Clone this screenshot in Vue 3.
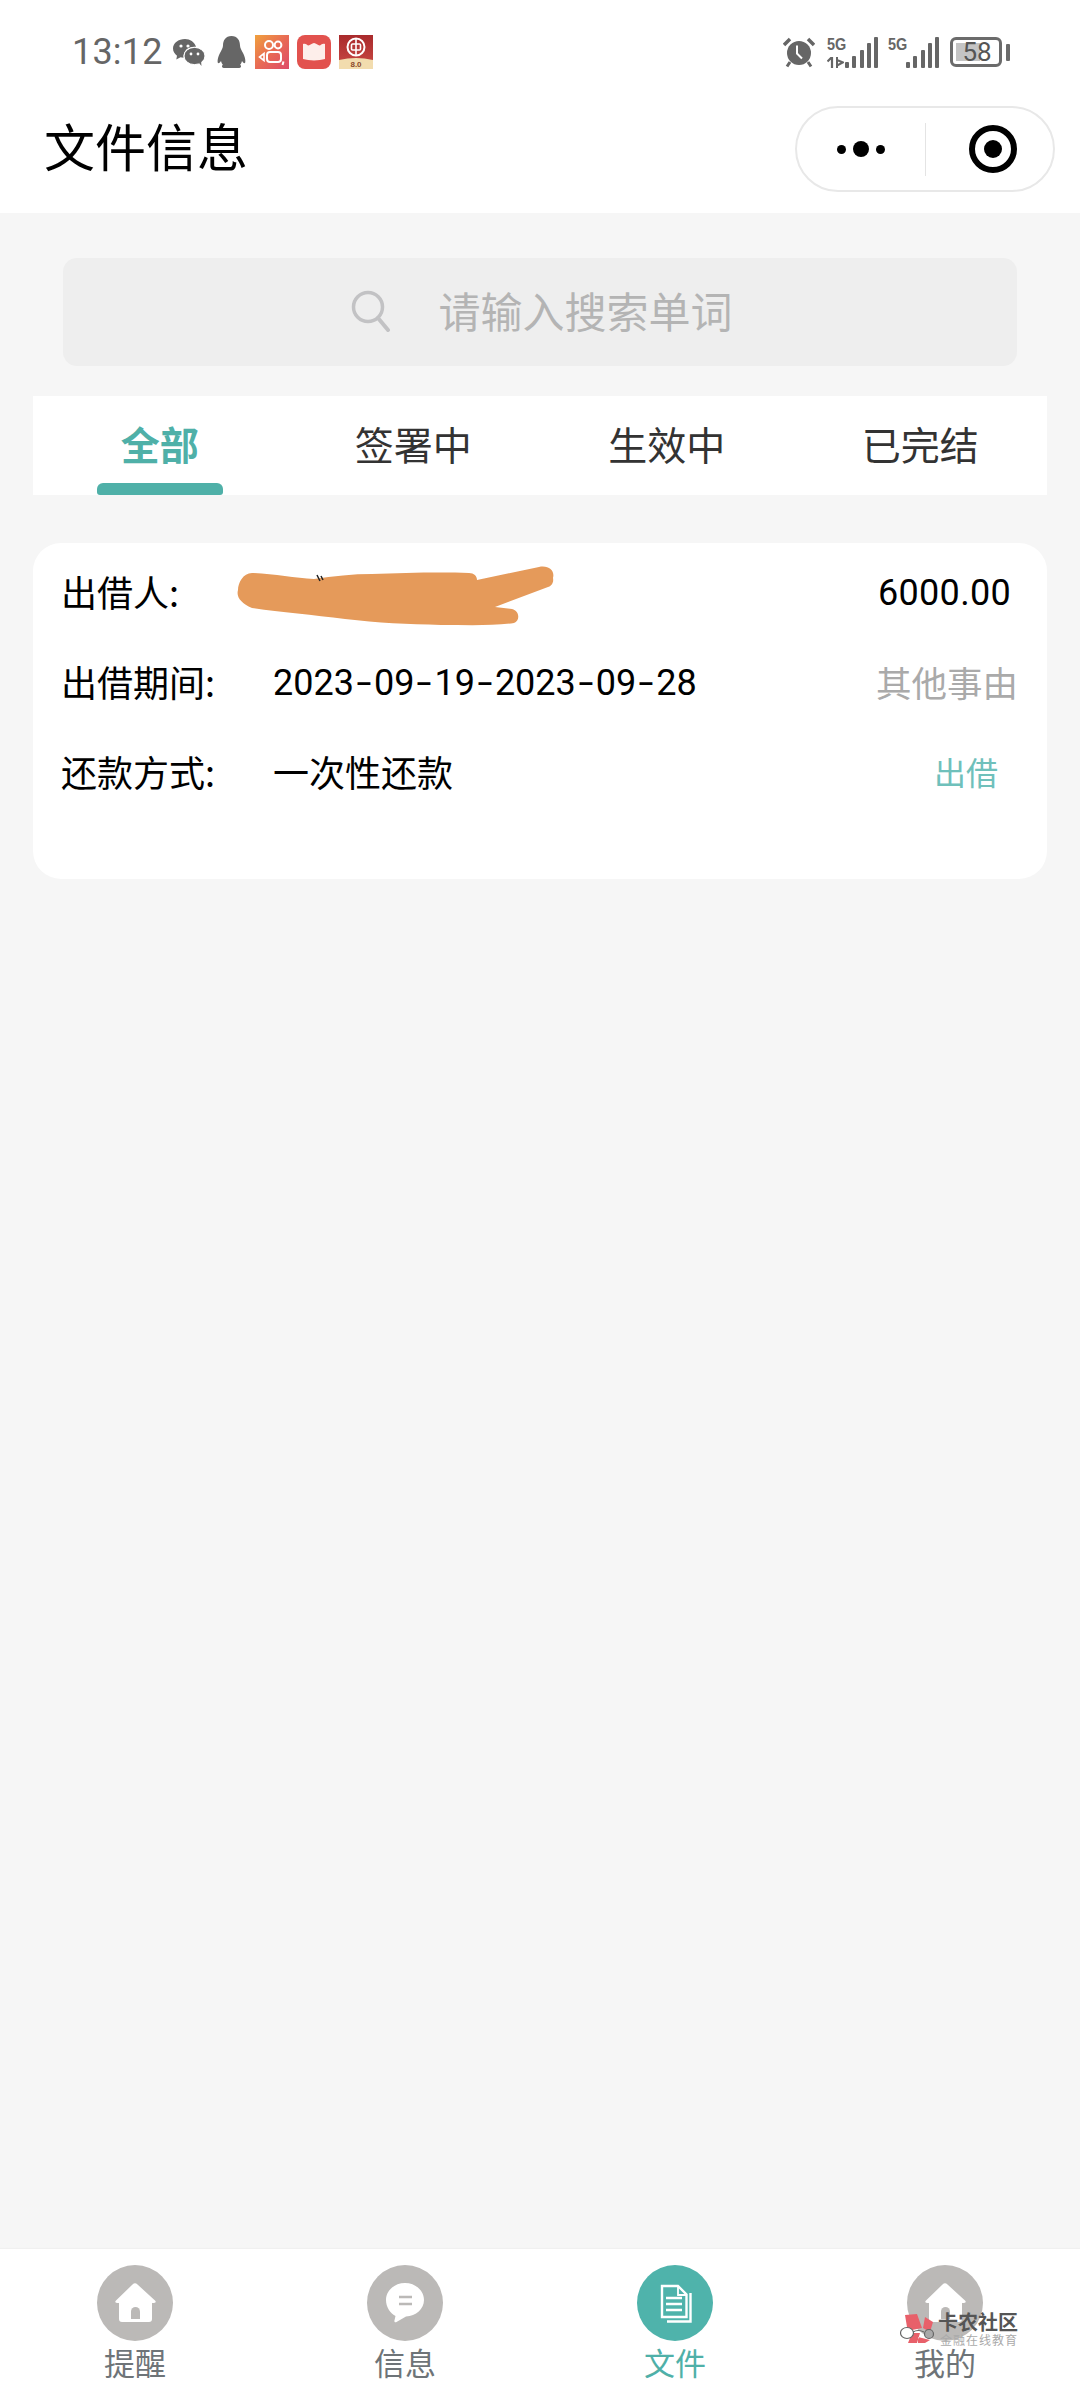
<template>
  <div class="page">
    <!-- 状态栏 -->
    <div class="status">
      <span class="time">13:12</span>
      <svg class="ic-wechat" width="32" height="27" viewBox="0 0 32 27">
        <path d="M12 0C5.500 0 0 4 0 9.500c0 3 1.700 5.500 4 7.200L3.300 20.500 7.500 18.300C8.500 18.600 9.500 18.800 10.500 18.800 10 10 17 7 23 7.800 21.500 3 17 0 12 0Z" fill="#666" />
        <ellipse cx="21.500" cy="17" rx="10.500" ry="8.600" fill="#666" stroke="#fff" stroke-width="1" />
        <path d="M26 24l2.500 3-.5-5z" fill="#666" />
        <circle cx="8" cy="7" r="1.600" fill="#fff" />
        <circle cx="15" cy="7" r="1.600" fill="#fff" />
        <circle cx="18" cy="15" r="1.400" fill="#fff" />
        <circle cx="25" cy="15" r="1.400" fill="#fff" />
      </svg>
      <svg class="ic-qq" width="29" height="32" viewBox="0 0 29 32">
        <path d="M14.500 0C8.500 0 6 4.500 6 9.500 6 12 4.500 14 3 17 .5 22 .2 26 1 27c1 .6 2.200-.8 3-2 .4 1.800 1.200 3.300 2.500 4.500H22.500C23.800 28.300 24.600 26.800 25 25c.8 1.200 2 2.600 3 2 .8-1 .5-5-2-10-1.500-3-3-5-3-7.500C23 4.500 20.500 0 14.500 0Z" fill="#666" />
        <rect x="5" y="28.500" width="19" height="3.500" rx="1.700" fill="#666" />
      </svg>
      <svg class="ic-app first" width="34" height="34" viewBox="0 0 34 34">
        <defs>
          <linearGradient id="ks" x1="0" y1="0" x2="1" y2="1">
            <stop offset="0" stop-color="#f0a13d" />
            <stop offset=".5" stop-color="#e86a55" />
            <stop offset="1" stop-color="#de4a68" />
          </linearGradient>
        </defs>
        <rect width="34" height="34" fill="url(#ks)" />
        <circle cx="14" cy="10" r="4" fill="none" stroke="#fff" stroke-width="2" />
        <circle cx="23" cy="10" r="3.400" fill="none" stroke="#fff" stroke-width="2" />
        <rect x="12" y="17" width="14" height="10" rx="3" fill="none" stroke="#fff" stroke-width="2" />
        <path d="M9 18.500v7l-4.500-3.500z" fill="none" stroke="#fff" stroke-width="1.600" />
        <path d="M28.500 26.500l-1 3.500" stroke="#fff" stroke-width="2" />
      </svg>
      <svg class="ic-app" width="34" height="34" viewBox="0 0 34 34">
        <rect width="34" height="34" rx="8" fill="#e2524e" />
        <path d="M6 9c3-1 4 1.500 5.500 1.500S15 8 17 8s4 2.500 5.500 2.500S25 8 28 9v15c-3 1-7 1-11 1.500C13 25 9 25 6 24Z" fill="#fdeeea" />
      </svg>
      <svg class="ic-app" width="34" height="34" viewBox="0 0 34 34">
        <defs>
          <linearGradient id="bank" x1="0" y1="0" x2="0" y2="1">
            <stop offset="0" stop-color="#a92a2c" />
            <stop offset="1" stop-color="#c2433f" />
          </linearGradient>
        </defs>
        <rect width="34" height="25" fill="url(#bank)" />
        <path d="M0 25q17-4 34 0v9H0z" fill="#f2dcae" />
        <circle cx="17" cy="12" r="8.500" fill="none" stroke="#fff" stroke-width="2" />
        <rect x="12.500" y="9" width="9" height="6" rx="1" fill="none" stroke="#fff" stroke-width="1.600" />
        <path d="M17 4v16" stroke="#fff" stroke-width="1.600" />
        <text x="17" y="32" text-anchor="middle" class="bank-ver">8.0</text>
      </svg>

      <div class="status-right">
        <svg width="32" height="31" viewBox="0 0 32 31">
          <circle cx="16" cy="16" r="12" fill="#666" />
          <path d="M1 8 7 2M31 8 25 2" stroke="#666" stroke-width="3.500" />
          <path d="M14 8.500v8l5 5" fill="none" stroke="#fff" stroke-width="2" />
          <path d="M7 25l-3 4.500M25 25l3 4.500" stroke="#666" stroke-width="3" />
        </svg>
        <div class="sim sim1">
          <span class="net">5G</span>
          <svg class="traffic" width="17" height="11" viewBox="0 0 17 11">
            <path d="M5 0v11M5 0 .5 4.500" fill="none" stroke="#666" stroke-width="2.200" />
            <path d="M10 0v11M10 3l6 2.500-6 3" fill="none" stroke="#666" stroke-width="2" />
          </svg>
          <div class="bars">
            <i v-for="h in barHeights" :key="h" :style="{ height: h + 'px' }"></i>
          </div>
        </div>
        <div class="sim sim2">
          <span class="net">5G</span>
          <div class="bars">
            <i v-for="h in barHeights" :key="h" :style="{ height: h + 'px' }"></i>
          </div>
        </div>
        <div class="battery">
          <div class="battery-fill"></div>
          <span>58</span>
        </div>
        <div class="battery-nub"></div>
      </div>
    </div>

    <!-- 标题栏 -->
    <div class="nav">
      <div class="nav-title">文件信息</div>
      <div class="capsule">
        <div class="capsule-more"><i class="dot"></i><i class="dot big"></i><i class="dot"></i></div>
        <div class="capsule-line"></div>
        <div class="capsule-target"><i></i></div>
      </div>
    </div>

    <div class="main">
      <div class="search">
        <svg width="40" height="42" viewBox="0 0 40 42">
          <circle cx="17" cy="17" r="14.500" fill="none" stroke="#c2c2c4" stroke-width="3.500" />
          <path d="M27 28l10 12" stroke="#c2c2c4" stroke-width="4" stroke-linecap="round" />
        </svg>
        <span>请输入搜索单词</span>
      </div>

      <div class="tabs">
        <div v-for="(t, i) in tabs" :key="t" class="tab" :class="{ on: i === 0 }">
          {{ t }}
          <div v-if="i === 0" class="tab-bar"></div>
        </div>
      </div>

      <div class="card">
        <div class="row">
          <span class="label cjk">出借人:</span>
          <span class="value"></span>
          <span class="amount">6000.00</span>
        </div>
        <div class="row">
          <span class="label cjk">出借期间:</span>
          <span class="value">
            <template v-for="(part, i) in dateParts" :key="i"><span v-if="i > 0" class="hyphen">-</span>{{ part }}</template>
          </span>
          <span class="reason cjk">其他事由</span>
        </div>
        <div class="row">
          <span class="label cjk">还款方式:</span>
          <span class="value cjk">一次性还款</span>
          <span class="kind cjk">出借</span>
        </div>
        <!-- 涂抹遮挡 -->
        <svg class="smear" width="340" height="70" viewBox="0 0 340 70">
          <path d="M19 8C40 9 62 13 81 14 100 11 120 9 139 9 170 8 205 7 236 8 241 8 244 11 244 15L306 2C316 0 322 6 320 13 321 18 318 21 315 22L262 42 279 44C287 46 287 56 281 58 260 61 235 60 208 60 175 59 145 58 112 54 80 50 45 47 19 43 8 38 3 32 5 25 5 18 10 8 19 8Z" fill="#e59a5a" />
          <path d="M84 10l3 6M88 11l2 4" stroke="#222" stroke-width="1.500" />
        </svg>
      </div>
    </div>

    <!-- 底部导航 -->
    <div class="tabbar">
      <div v-for="item in barItems" :key="item.label" class="bar-item" :class="{ on: item.on }">
        <svg class="bar-icon" width="76" height="76" viewBox="0 0 76 76">
          <circle cx="38" cy="38" r="38" :fill="item.on ? '#4fb3ab' : '#bbb9b7'" />
          <template v-if="item.icon === 'home'">
            <path d="M35.500 19.500a3.500 3.500 0 0 1 5 0L58 35.500c1.500 1.500.5 2.500-1 2.500H55V54a3 3 0 0 1-3 3H25a3 3 0 0 1-3-3V38H20c-1.500 0-2.500-1-1-2.500Z" fill="#fff" />
            <path d="M34 54V46.500a4.500 4.500 0 0 1 9 0V54Z" fill="#bbb9b7" />
          </template>
          <template v-else-if="item.icon === 'msg'">
            <path d="M38 18c10.500 0 19 7.500 19 17 0 9-8 16-18 16.500L29.500 57c-1.500.8-2.500-.3-2-1.800l1-4.200C23 48 19 42 19 35c0-9.500 8.500-17 19-17Z" fill="#fff" />
            <path d="M32 32h13M32 39h13" stroke="#bbb9b7" stroke-width="2.600" />
          </template>
          <template v-else>
            <path d="M25 21H41L49.500 29.500V52H25Z" fill="none" stroke="#fff" stroke-width="2.400" />
            <path d="M41 21V30H49.500" fill="none" stroke="#fff" stroke-width="1.800" />
            <path d="M29 33H45M29 39H45M29 45H45" stroke="#fff" stroke-width="2.400" />
            <path d="M53.500 28V56.500H30" fill="none" stroke="#fff" stroke-width="2.400" />
          </template>
        </svg>
        <span class="bar-label">{{ item.label }}</span>
      </div>

      <!-- 水印 -->
      <div class="mark">
        <svg width="36" height="33" viewBox="0 0 36 33">
          <path d="M5 2 17 1 22 15 12 17 7 14ZM23 15 25 4 33 9 30 19ZM12 20 8 30H17L20 20ZM18 24 30 27 25 30H18Z" fill="#e8606a" />
          <ellipse cx="7" cy="20" rx="6.500" ry="5.500" fill="#fff" stroke="#666" stroke-width="1.200" />
          <circle cx="29" cy="21" r="4.500" fill="#a9a9a9" stroke="#666" stroke-width="1.200" />
          <path d="M13 19q5-3 11 0" fill="none" stroke="#666" stroke-width="1.200" />
        </svg>
        <div class="mark-text">
          <div class="mark-name">卡农社区</div>
          <div class="mark-sub">金融在线教育</div>
        </div>
      </div>
    </div>
  </div>
</template>

<script setup>
const tabs = ['全部', '签署中', '生效中', '已完结']
const dateParts = '2023-09-19-2023-09-28'.split('-')
const barHeights = [6, 12, 18, 25, 31]
const barItems = [
  { label: '提醒', icon: 'home' },
  { label: '信息', icon: 'msg' },
  { label: '文件', icon: 'file', on: true },
  { label: '我的', icon: 'home' }
]
</script>

<style>
body {
  background: #f6f6f6;
}
</style>

<style scoped>
.page {
  width: 1080px;
  height: 2400px;
  display: flex;
  flex-direction: column;
  background: #f6f6f6;
  font-family: "Noto Sans CJK SC", "Noto Sans", sans-serif;
  color: #000;
  overflow: hidden;
}

.status {
  height: 68px;
  margin-top: 18px;
  padding: 0 70px 0 72px;
  display: flex;
  align-items: center;
  background: #fff;
  box-shadow: 0 -18px 0 #fff;
}
.time {
  font-family: Roboto, sans-serif;
  font-size: 36px;
  letter-spacing: 0.2px;
  color: #666;
  margin-right: 10px;
}
.ic-qq {
  margin-left: 12px;
}
.ic-app {
  margin-left: 8px;
}
.ic-app.first {
  margin-left: 9px;
}
.bank-ver {
  font-family: "Liberation Sans", sans-serif;
  font-size: 8px;
  font-weight: 700;
  fill: #8a4a2a;
}
.status-right {
  margin-left: auto;
  display: flex;
  align-items: center;
}
.sim {
  position: relative;
  width: 51px;
  height: 31px;
  display: flex;
  justify-content: flex-end;
  align-items: flex-end;
}
.sim1 {
  margin-left: 12px;
}
.sim2 {
  margin-left: 10px;
}
.net {
  position: absolute;
  left: 0;
  top: -1px;
  font-family: "Liberation Sans", sans-serif;
  font-weight: 700;
  font-size: 17px;
  line-height: 17px;
  color: #666;
  transform: scaleX(0.85);
  transform-origin: left center;
}
.traffic {
  position: absolute;
  left: 0;
  bottom: 0;
}
.bars {
  display: flex;
  align-items: flex-end;
  gap: 3.2px;
}
.bars i {
  width: 4px;
  background: #666;
  border-radius: 1px;
}
.battery {
  position: relative;
  width: 52px;
  height: 30px;
  margin-left: 11px;
  border: 3px solid #6b6b6b;
  border-radius: 6px;
  box-sizing: border-box;
  display: flex;
  align-items: center;
  justify-content: center;
}
.battery-fill {
  position: absolute;
  left: 3px;
  top: 3px;
  bottom: 3px;
  width: 24px;
  background: #c4c4c4;
}
.battery span {
  position: relative;
  left: 1px;
  font-family: Roboto, sans-serif;
  font-size: 26px;
  line-height: 24px;
  color: #555;
}
.battery-nub {
  width: 4px;
  height: 17px;
  margin-left: 4px;
  background: #6b6b6b;
  border-radius: 1px;
}

.nav {
  height: 127px;
  padding: 20px 25px 21px 44px;
  box-sizing: border-box;
  display: flex;
  align-items: center;
  justify-content: space-between;
  background: #fff;
}
.nav-title {
  margin-top: -8px;
  font-size: 51px;
  color: #000;
}
.capsule {
  width: 260px;
  height: 86px;
  box-sizing: border-box;
  border: 2px solid #e8e8e8;
  border-radius: 43px;
  display: flex;
  align-items: center;
}
.capsule-more {
  width: 128px;
  display: flex;
  align-items: center;
  justify-content: center;
  gap: 7px;
}
.dot {
  width: 9px;
  height: 9px;
  border-radius: 50%;
  background: #000;
}
.dot.big {
  width: 16px;
  height: 16px;
}
.capsule-line {
  width: 1px;
  height: 53px;
  background: #e4e4e4;
}
.capsule-target {
  width: 48px;
  height: 48px;
  margin-left: 43px;
  box-sizing: border-box;
  border: 6px solid #000;
  border-radius: 50%;
  display: flex;
  align-items: center;
  justify-content: center;
}
.capsule-target i {
  width: 18px;
  height: 18px;
  border-radius: 50%;
  background: #000;
}

.main {
  flex: 1;
  padding-top: 45px;
}
.search {
  height: 108px;
  margin: 0 63px 30px 63px;
  border-radius: 14px;
  background: #eeeeee;
  display: flex;
  align-items: center;
  justify-content: center;
  gap: 47px;
  padding-left: 4px;
  font-size: 42px;
  color: #b4b4b4;
}
.search svg {
  margin-top: -3px;
}
.search span {
  margin-top: -6px;
}
.tabs {
  height: 99px;
  margin: 0 33px 48px 33px;
  background: #fff;
  display: grid;
  grid-template-columns: repeat(4, 1fr);
}
.tab {
  position: relative;
  text-align: center;
  font-size: 39px;
  line-height: 95px;
  height: 99px;
  color: #333;
}
.tab.on {
  color: #4fb0a8;
  font-weight: 700;
}
.tab-bar {
  position: absolute;
  left: 64px;
  bottom: 0;
  width: 126px;
  height: 12px;
  border-radius: 6px 6px 3px 3px;
  background: #4fb0a8;
}

.card {
  position: relative;
  height: 336px;
  margin: 0 33px;
  padding: 5px 29px 0 28px;
  box-sizing: border-box;
  border-radius: 28px;
  background: #fff;
}
.row {
  height: 90px;
  display: flex;
  align-items: center;
  font-size: 36px;
}
.cjk {
  margin-top: -4px;
}
.label {
  width: 212px;
  flex: none;
}
.value {
  flex: 1;
  font-family: Roboto, "Noto Sans CJK SC", sans-serif;
}
.hyphen {
  display: inline-block;
  width: 20px;
  text-align: center;
  transform: scaleX(1.5);
}
.amount {
  font-family: Roboto, sans-serif;
  letter-spacing: 0.3px;
  margin-right: 7px;
}
.reason {
  font-size: 35.500px;
  color: #aaa;
}
.kind {
  font-size: 32px;
  color: #6fc0bb;
  margin-right: 20px;
}
.smear {
  position: absolute;
  left: 200px;
  top: 22px;
  overflow: visible;
}

.tabbar {
  position: relative;
  height: 151px;
  flex: none;
  background: #fff;
  display: grid;
  grid-template-columns: repeat(4, 270px);
  box-shadow: 0 -1px 1px #f0f0f0;
}
.bar-item {
  display: flex;
  flex-direction: column;
  align-items: center;
  padding-top: 16px;
  color: #6e7478;
}
.bar-item.on {
  color: #4fb0a8;
}
.bar-label {
  font-size: 31px;
  line-height: 31px;
  margin-top: 5px;
}
.mark {
  position: absolute;
  left: 900px;
  top: 64px;
  display: flex;
  gap: 2px;
  font-family: "Liberation Sans", "Noto Sans CJK SC", sans-serif;
}
.mark-name {
  margin-top: 1px;
  font-size: 20px;
  font-weight: 700;
  line-height: 19px;
  color: #555;
  white-space: nowrap;
}
.mark-sub {
  margin-top: 3px;
  margin-left: 2px;
  font-size: 12px;
  letter-spacing: 1px;
  line-height: 11px;
  color: #aaa;
  white-space: nowrap;
}
</style>
